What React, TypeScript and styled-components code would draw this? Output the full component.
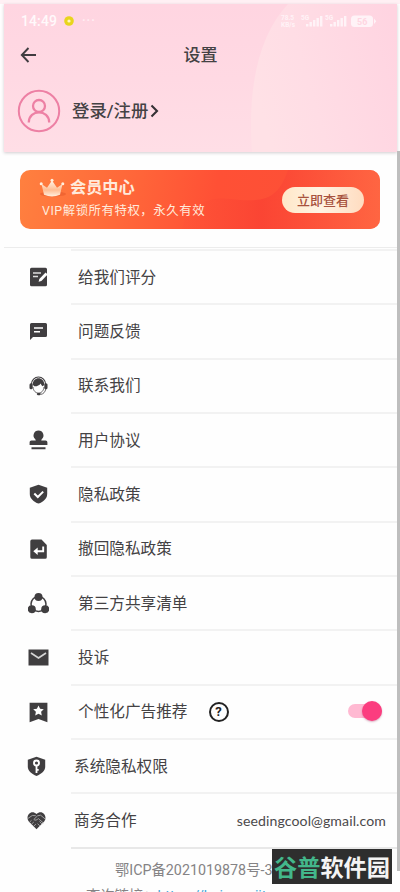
import React from "react";
import styled, { createGlobalStyle } from "styled-components";

const Global = createGlobalStyle`
  * { box-sizing: border-box; }
  html, body { margin: 0; padding: 0; background: #fdfcfd; }
  body { overflow: hidden; font-family: Roboto, "Noto Sans CJK SC", sans-serif; color: #444244; }
  svg { display: block; flex: none; }
`;

const Screen = styled.div`
  position: relative;
  width: 400px;
  height: 892px;
  overflow: hidden;
  padding: 4px 3px 0 4px;
  background: #fefefe;
`;
const TopEdge = styled.div`
  position: absolute;
  inset: 0 0 auto 0;
  height: 4px;
  background: #fff0f4;
`;
const Header = styled.header`
  position: relative;
  height: 148px;
  background: linear-gradient(180deg, #ffd5e1 0%, #ffd9e3 50%, #ffdee6 100%);
  box-shadow: 0 1px 3px rgba(80, 60, 70, 0.25);
`;
const HeaderArt = styled.svg`
  position: absolute;
  inset: 0;
`;
const StatusBar = styled.div`
  position: relative;
  display: flex;
  align-items: center;
  height: 34px;
  padding: 0 20px 0 17px;
  color: #fff9fb;
`;
const Clock = styled.span`
  width: 42px;
  font: 500 14px/20px Roboto, sans-serif;
  letter-spacing: 0.1px;
`;
const StatusDots = styled.span`
  flex: 1;
  padding-left: 7px;
  font: 700 12px/16px Roboto, sans-serif;
  letter-spacing: 1px;
  opacity: 0.7;
`;
const TitleBar = styled.div`
  position: relative;
  display: grid;
  grid-template-columns: 40px 1fr 40px;
  align-items: center;
  height: 34px;
  padding-left: 16px;
  padding-right: 16px;
`;
const Title = styled.h1`
  margin: 0;
  text-align: center;
  font-size: 17px;
  line-height: 24px;
  font-weight: 500;
`;
const Account = styled.div`
  position: relative;
  display: flex;
  align-items: center;
  height: 78px;
  padding-left: 13px;
`;
const AccountName = styled.span`
  margin-left: 11px;
  font-size: 17.4px;
  line-height: 24px;
  font-weight: 500;
`;
const VipArea = styled.section`
  height: 96px;
  padding: 18px 17px 0 16px;
  border-bottom: 1px solid #ececec;
`;
const VipCard = styled.div`
  position: relative;
  display: flex;
  align-items: center;
  justify-content: space-between;
  height: 59px;
  padding: 0 16px 0 18px;
  border-radius: 10px;
  overflow: hidden;
  background: linear-gradient(100deg, #ff803f 0%, #ff693a 28%, #ff5035 54%, #fd5036 74%, #ff6742 100%);
`;
const VipArt = styled.svg`
  position: absolute;
  inset: 0;
`;
const VipCopy = styled.div`
  position: relative;
  color: #ffeadb;
`;
const VipHeading = styled.div`
  display: flex;
  align-items: center;
  gap: 4px;
  height: 20px;
  font-size: 16.2px;
  line-height: 20px;
  font-weight: 700;
`;
const VipNote = styled.div`
  padding-left: 4px;
  height: 20px;
  margin-top: 3px;
  line-height: 20px;
  font-size: 12.4px;
  letter-spacing: 0.55px;
  white-space: nowrap;
`;
const VipButton = styled.button`
  position: relative;
  width: 82px;
  height: 26px;
  padding: 0;
  border: 0;
  border-radius: 13px;
  background: linear-gradient(90deg, #ffe7c8, #fff3e3 45%, #ffdcc0);
  color: #a8523e;
  font: 500 13px/25px "Noto Sans CJK SC", sans-serif;
`;
const List = styled.ul`
  margin: 1px 0 0;
  padding: 0;
  list-style: none;
`;
const Row = styled.li<{ $near?: boolean }>`
  display: grid;
  grid-template-columns: 67px 1fr;
  height: 54.35px;
  svg.lead { margin: 18px auto auto ${(p) => (p.$near ? 22 : 24)}px; }
`;
const RowBody = styled.div<{ $near?: boolean }>`
  display: flex;
  align-items: center;
  padding: 1px 11px 0 ${(p) => (p.$near ? 3 : 7)}px;
  border-top: 2px solid #f2f2f2;
`;
const Label = styled.span`
  font-size: 15.65px;
  line-height: 22px;
  white-space: nowrap;
`;
const Help = styled.span`
  display: grid;
  place-items: center;
  width: 20px;
  height: 20px;
  margin: -1px 0 0 21px;
  border: 2px solid #222;
  border-radius: 50%;
  font: 700 13px/16px Roboto, sans-serif;
  color: #222;
`;
const Track = styled.span`
  display: flex;
  align-items: center;
  justify-content: flex-end;
  width: 34px;
  height: 14px;
  margin: -2px 4px 0 auto;
  border-radius: 7px;
  background: #ffb9d2;
`;
const Thumb = styled.span`
  flex: none;
  width: 20px;
  height: 20px;
  border-radius: 50%;
  background: #fb3d7f;
  box-shadow: 0 1px 2px rgba(150, 30, 80, 0.35);
`;
const Email = styled.span`
  margin-left: auto;
  font: 400 14.1px/20px Lato, sans-serif;
  letter-spacing: 0.1px;
  color: #4b494b;
`;
const Footer = styled.footer`
  margin-left: 67px;
  border-top: 2px solid #e8e8e8;
  color: #858385;
  font-size: 14.3px;
  white-space: nowrap;
`;
const Licence = styled.div`
  padding: 11px 0 0 44px;
  height: 31px;
  line-height: 20px;
`;
const Lookup = styled.div`
  padding: 6px 0 0 15px;
  line-height: 20px;
  span { color: #43a6d8; }
`;
const Scrollbar = styled.div`
  position: absolute;
  top: 151px;
  right: 0;
  width: 3px;
  height: 720px;
  background: #bebebe;
`;
const Stamp = styled.div`
  position: absolute;
  left: 272px;
  top: 849px;
  width: 120px;
  height: 35px;
  padding-left: 2px;
  background: #2e2e2e;
  color: #f4f4f4;
  font: 700 23.2px/34px "Noto Sans CJK SC", sans-serif;
  white-space: nowrap;
  span { color: #43b78b; }
`;

const dark = "#403e40";

const icons: Record<string, React.ReactNode> = {
  rate: (
    <>
      <path d="M3.5 .8h14A1.500 1.500 0 0 1 19 2.300v15.400a1.500 1.500 0 0 1-1.500 1.500h-14A1.500 1.500 0 0 1 2 17.700V2.300A1.500 1.500 0 0 1 3.500 .8z" fill={dark} />
      <path d="M5 6h8M5 9.500h5" stroke="#ddd" strokeWidth="1.300" />
      <path d="M10.600 14.800l.7-2.700L17.600 5.500l2 2-6.200 6.600z" fill="#fff" />
    </>
  ),
  feedback: (
    <>
      <path d="M3.500 2h14A1.500 1.500 0 0 1 19 3.500v11a1.500 1.500 0 0 1-1.500 1.500H5l-3 3v-15.500A1.500 1.500 0 0 1 3.500 2z" fill={dark} />
      <path d="M6 7h9M6 10.800h6" stroke="#fff" strokeWidth="1.600" />
    </>
  ),
  contact: (
    <>
      <path d="M3.500 8a7 7 0 0 1 14 0" fill="none" stroke={dark} strokeWidth="1.200" />
      <path d="M4.700 8.800C4.700 0 16.300 0 16.300 8.800l-1.500 1.500c-1.200-.6-1.800-1.700-2-2.800-1.600 2-4 3-6.400 2.800z" fill={dark} />
      <rect x="1.500" y="7.200" width="3.200" height="6" rx="1.500" fill={dark} />
      <rect x="16.300" y="7.200" width="3.200" height="6" rx="1.500" fill={dark} />
      <path d="M5 11c.4 4 2.600 6 5.500 6s5.100-2 5.500-6M17.800 13c-.6 3-2.400 5-5 5.400" fill="none" stroke={dark} strokeWidth=".8" />
      <rect x="8.800" y="17" width="4" height="2.200" rx="1.100" fill={dark} />
    </>
  ),
  terms: (
    <path d="M10.500 .5a5 5 0 0 1 3.200 8.800l-.5 1.300H17.500c1.200 0 1.900.8 1.900 2v2.400H1.600v-2.400c0-1.200.7-2 1.900-2h4.300l-.5-1.300A5 5 0 0 1 10.500 .5zM3.500 17.300h14v1.900h-14z" fill={dark} />
  ),
  privacy: (
    <>
      <path d="M10.500 .8l8.700 2.900v6.200c0 4.500-3.800 7.700-8.700 9.700-4.900-2-8.700-5.200-8.700-9.700V3.700z" fill={dark} />
      <path d="M6.300 9.500l3.500 3.500 5.400-5.400" fill="none" stroke="#fff" strokeWidth="2" />
    </>
  ),
  revoke: (
    <>
      <path d="M4 .5h9.500L18.800 6v12.200a1.600 1.600 0 0 1-1.600 1.600H4a1.700 1.700 0 0 1-1.700-1.600v-16A1.700 1.700 0 0 1 4 .5z" fill={dark} />
      <path d="M15.200 7.500v4.700H8" fill="none" stroke="#fff" strokeWidth="1.900" />
      <path d="M5.300 12.200l4.400-3.700v7.400z" fill="#fff" />
    </>
  ),
  share: (
    <>
      <circle cx="10.500" cy="11" r="7.500" fill="none" stroke={dark} strokeWidth="1.500" />
      <circle cx="10.500" cy="4" r="4" fill={dark} />
      <circle cx="3.800" cy="16.200" r="4" fill={dark} />
      <circle cx="17.200" cy="16.200" r="4" fill={dark} />
    </>
  ),
  complaint: (
    <>
      <path d="M.5 2.500h20v16H.500z" fill={dark} />
      <path d="M3 6l7.500 5L18 6" fill="none" stroke="#d5d5d5" strokeWidth="1.700" />
    </>
  ),
  ads: (
    <>
      <path d="M1.600 .8h17.800v19.500l-8.900-3.300-8.900 3.300z" fill={dark} />
      <path d="M10.500 3.500l1.600 3.300 3.700.5-2.700 2.500.7 3.700-3.300-1.800-3.300 1.800.7-3.700-2.700-2.500 3.700-.5z" fill="#fff" />
    </>
  ),
  system: (
    <>
      <path d="M10.500 .7l8.700 3v7c0 4.500-4 7.200-8.700 9.300-4.700-2.100-8.700-4.800-8.700-9.300v-7z" fill={dark} />
      <circle cx="10.500" cy="7" r="2.500" fill="none" stroke="#fff" strokeWidth="1.900" />
      <path d="M10.500 9.500V17M10.500 13.800h2.200" fill="none" stroke="#fff" strokeWidth="1.800" />
    </>
  ),
  business: (
    <>
      <path d="M10.500 19.300L2.600 11.200C-1 6 5 -.9 10.500 4 16 -.9 22 6 18.400 11.200z" fill={dark} />
      <path d="M1.800 8.500l4.500-3 3.500.2M19.200 9l-4.600-3.800-3 .6-3.800 3.700c1.500 1.300 3 .5 4.600-.9l5 4.400M3.500 12.200l2-1.900M5.500 14.200l2.300-2.200M7.700 16.200l2.200-2.100M13.500 11.500l2.500 2.600M11.600 13.600l2.200 2.300" fill="none" stroke="#aaa" strokeWidth=".9" />
    </>
  ),
};

const rows = [
  ["rate", "给我们评分"],
  ["feedback", "问题反馈"],
  ["contact", "联系我们"],
  ["terms", "用户协议"],
  ["privacy", "隐私政策"],
  ["revoke", "撤回隐私政策"],
  ["share", "第三方共享清单"],
  ["complaint", "投诉"],
  ["ads", "个性化广告推荐"],
  ["system", "系统隐私权限"],
  ["business", "商务合作"],
];

function StatusIcons() {
  return (
    <svg width="98" height="16" viewBox="0 0 98 16" fill="#fff3f7">
      <g fontFamily="Roboto, sans-serif" fontSize="6.500" fontWeight="700">
        <text x="2" y="7">78.5</text>
        <text x="2" y="13.500">KB/s</text>
        <text x="22" y="7">5G</text>
        <text x="46" y="7">5G</text>
      </g>
      {[0, 24].map((x) => (
        <path key={x} transform={`translate(${x} 0)`} d="M27 11h2.400v2.500H27zM30.500 9h2.400v4.500h-2.400zM34 7h2.400v6.500H34zM37.500 5h2.400v8.500h-2.400zM41 3h2.400v10.500H41z" />
      ))}
      <rect x="72" y="2.500" width="22" height="11.500" rx="3.500" />
      <path d="M95 5.500l2.200 2.700-2.200 2.700z" />
      <text x="78" y="11.500" fill="#ffd6e2" fontFamily="Roboto, sans-serif" fontSize="9" fontWeight="700">56</text>
    </svg>
  );
}

export default function App() {
  return (
    <>
      <Global />
      <Screen>
        <TopEdge />
        <Header>
          <HeaderArt width="393" height="148">
            <defs>
              <linearGradient id="petal" x1="0" y1=".5" x2="1" y2=".2">
                <stop offset="0" stopColor="#ffe1e6" />
                <stop offset=".35" stopColor="#ffdde5" />
                <stop offset="1" stopColor="#ffd4e1" />
              </linearGradient>
            </defs>
            <path d="M284 0C257 29 243 77 248 148H393V0z" fill="url(#petal)" />
          </HeaderArt>
          <StatusBar>
            <Clock>14:49</Clock>
            <svg width="12" height="12" viewBox="0 0 12 12">
              <circle cx="6" cy="6" r="4.800" fill="#e8d51c" />
              <circle cx="6" cy="6" r="1.600" fill="#fff7bd" />
            </svg>
            <StatusDots>···</StatusDots>
            <StatusIcons />
          </StatusBar>
          <TitleBar>
            <svg width="17" height="18" viewBox="0 0 17 18" fill="none" stroke="#403c40" strokeWidth="1.900">
              <path d="M8.500 2L1.800 9l6.700 7M2 9h14" />
            </svg>
            <Title>设置</Title>
          </TitleBar>
          <Account>
            <svg width="44" height="44" viewBox="0 0 44 44" fill="none" stroke="#ed80a4" strokeWidth="2">
              <circle cx="22" cy="22" r="20.200" />
              <circle cx="22" cy="17" r="6" strokeWidth="2.300" />
              <path d="M11.800 33.500c0-13.500 20.400-13.500 20.400 0" strokeWidth="2.300" />
            </svg>
            <AccountName>登录/注册</AccountName>
            <svg width="11" height="14" viewBox="0 0 11 14" fill="none" stroke="#353135" strokeWidth="2.100">
              <path d="M3.500 1.500L9 7l-5.500 5.500" />
            </svg>
          </Account>
        </Header>
        <VipArea>
          <VipCard>
            <VipArt width="360" height="59">
              <defs>
                <linearGradient id="wave" x1="0" y1="0" x2="1" y2="0">
                  <stop offset="0" stopColor="#ff5537" />
                  <stop offset=".4" stopColor="#fa4233" />
                  <stop offset="1" stopColor="#ff6542" />
                </linearGradient>
              </defs>
              <path d="M162 59c5-23 25-33 48-30 35 4 48 0 58-29h92v59z" fill="url(#wave)" opacity=".8" />
            </VipArt>
            <VipCopy>
              <VipHeading>
                <svg width="28" height="20" viewBox="0 0 28 20">
                  <defs>
                    <linearGradient id="gold" x1="0" y1="0" x2="0" y2="1">
                      <stop offset="0" stopColor="#fff5e9" />
                      <stop offset=".6" stopColor="#ffbe94" />
                      <stop offset="1" stopColor="#fff0df" />
                    </linearGradient>
                  </defs>
                  <ellipse cx="15" cy="16" rx="13" ry="2.500" fill="#d84920" opacity=".35" />
                  <path d="M3.500 6l5.500 3.700L14 2.500l5 7.200L24.500 6 22 16.800Q14 20 6 16.800z" fill="url(#gold)" />
                  <g fill="#fff0df"><circle cx="3.200" cy="5.700" r="1.500" /><circle cx="14" cy="2.300" r="1.500" /><circle cx="24.800" cy="5.700" r="1.500" /></g>
                </svg>
                会员中心
              </VipHeading>
              <VipNote>VIP解锁所有特权，永久有效</VipNote>
            </VipCopy>
            <VipButton>立即查看</VipButton>
          </VipCard>
        </VipArea>
        <List>
          {rows.map(([id, text]) => {
            const near = id === "system" || id === "business";
            return (
              <Row key={id} $near={near}>
                <svg className="lead" width="21" height="21" viewBox="0 0 21 21">{icons[id]}</svg>
                <RowBody $near={near}>
                  <Label>{text}</Label>
                  {id === "ads" && (
                    <>
                      <Help>?</Help>
                      <Track><Thumb /></Track>
                    </>
                  )}
                  {id === "business" && <Email>seedingcool@gmail.com</Email>}
                </RowBody>
              </Row>
            );
          })}
        </List>
        <Footer>
          <Licence>鄂ICP备2021019878号-36A</Licence>
          <Lookup>查询链接：<span>https://beian.miit.gov.cn</span></Lookup>
        </Footer>
        <Scrollbar />
        <Stamp><span>谷普</span>软件园</Stamp>
      </Screen>
    </>
  );
}
